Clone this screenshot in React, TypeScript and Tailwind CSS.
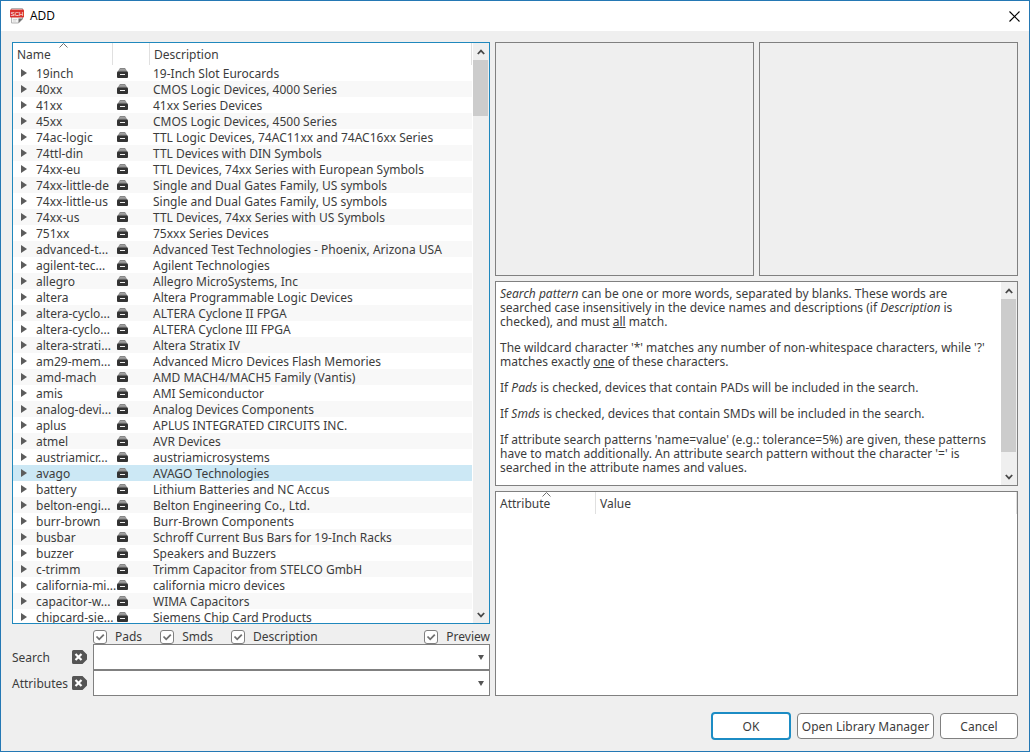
import { useState } from 'react';
import type { ReactNode } from 'react';
import clsx from 'clsx';

const LIBRARIES: [string, string][] = [
  ['19inch', '19-Inch Slot Eurocards'],
  ['40xx', 'CMOS Logic Devices, 4000 Series'],
  ['41xx', '41xx Series Devices'],
  ['45xx', 'CMOS Logic Devices, 4500 Series'],
  ['74ac-logic', 'TTL Logic Devices, 74AC11xx and 74AC16xx Series'],
  ['74ttl-din', 'TTL Devices with DIN Symbols'],
  ['74xx-eu', 'TTL Devices, 74xx Series with European Symbols'],
  ['74xx-little-de', 'Single and Dual Gates Family, US symbols'],
  ['74xx-little-us', 'Single and Dual Gates Family, US symbols'],
  ['74xx-us', 'TTL Devices, 74xx Series with US Symbols'],
  ['751xx', '75xxx Series Devices'],
  ['advanced-t...', 'Advanced Test Technologies - Phoenix, Arizona USA'],
  ['agilent-tec...', 'Agilent Technologies'],
  ['allegro', 'Allegro MicroSystems, Inc'],
  ['altera', 'Altera Programmable Logic Devices'],
  ['altera-cyclo...', 'ALTERA Cyclone II FPGA'],
  ['altera-cyclo...', 'ALTERA Cyclone III FPGA'],
  ['altera-strati...', 'Altera Stratix IV'],
  ['am29-mem...', 'Advanced Micro Devices Flash Memories'],
  ['amd-mach', 'AMD MACH4/MACH5 Family (Vantis)'],
  ['amis', 'AMI Semiconductor'],
  ['analog-devi...', 'Analog Devices Components'],
  ['aplus', 'APLUS INTEGRATED CIRCUITS INC.'],
  ['atmel', 'AVR Devices'],
  ['austriamicr...', 'austriamicrosystems'],
  ['avago', 'AVAGO Technologies'],
  ['battery', 'Lithium Batteries and NC Accus'],
  ['belton-engi...', 'Belton Engineering Co., Ltd.'],
  ['burr-brown', 'Burr-Brown Components'],
  ['busbar', 'Schroff Current Bus Bars for 19-Inch Racks'],
  ['buzzer', 'Speakers and Buzzers'],
  ['c-trimm', 'Trimm Capacitor from STELCO GmbH'],
  ['california-mi...', 'california micro devices'],
  ['capacitor-w...', 'WIMA Capacitors'],
  ['chipcard-sie...', 'Siemens Chip Card Products'],
];

function SchIcon() {
  return (
    <svg viewBox="0 0 14 16" className="h-4 w-3.5" aria-hidden>
      <path d="M1.5.5h11v10.500l-4 4h-7z" fill="#f4f4f4" stroke="#b4b4b4" />
      <path d="M13 10.500H8.500V15z" fill="#6e6e6e" />
      <path d="M3 11.500h4M3 13h3" stroke="#d4d4d4" />
      <rect x="0" y="1.500" width="14" height="8" rx=".8" fill="#d9302c" />
      <text x="7" y="7.800" textAnchor="middle" fill="#fff" fontSize="6" fontFamily="Liberation Sans, sans-serif">SCH</text>
    </svg>
  );
}

function DrawerIcon() {
  return (
    <svg viewBox="0 0 11 10" className="h-2.5 w-[11px]" aria-hidden>
      <path d="M3 0h5l1 1.500 1.500 2.500H.5L2 1.500z" fill="#858585" />
      <path d="M2.500 1.500h6M1.500 3h8" stroke="#b8b8b8" strokeWidth=".5" />
      <rect x="0" y="3.500" width="11" height="6.500" rx="1" fill="#333" />
      <path d="M3 6.500h5" stroke="#f2f2f2" />
    </svg>
  );
}

function SortMark() {
  return (
    <svg viewBox="0 0 9 5" className="absolute left-[46px] top-0 h-[5px] w-[9px]" aria-hidden>
      <path d="M.5 4.5l4-4 4 4" fill="none" stroke="#707070" />
    </svg>
  );
}

function ScrollBar({ thumb }: { thumb: string }) {
  return (
    <div className="flex w-[17px] shrink-0 flex-col border-l border-white bg-[#efefef] pr-px">
      <button aria-label="Scroll up" className="flex h-[17px] w-full shrink-0 items-center justify-center">
        <svg viewBox="0 0 8 6" className="h-1.5 w-2"><path d="M.8 5l3.2-3.4L7.2 5" fill="none" stroke="#484848" strokeWidth="1.8" /></svg>
      </button>
      <div className="min-h-0 flex-1"><div className={clsx('bg-[#cccccc]', thumb)} /></div>
      <button aria-label="Scroll down" className="flex h-[17px] w-full shrink-0 items-center justify-center">
        <svg viewBox="0 0 8 6" className="h-1.5 w-2"><path d="M.8 1l3.2 3.4L7.2 1" fill="none" stroke="#484848" strokeWidth="1.8" /></svg>
      </button>
    </div>
  );
}

function Check({ className, children }: { className?: string; children: ReactNode }) {
  const [on, setOn] = useState(true);
  return (
    <label className={clsx('flex items-center gap-2 leading-[14px]', className)}>
      <span className="relative h-3.5 w-3.5">
        <input
          type="checkbox" checked={on} onChange={(e) => setOn(e.target.checked)}
          className="block h-3.5 w-3.5 appearance-none rounded-[3px] border border-[#808080] bg-white"
        />
        {on && (
          <svg viewBox="0 0 14 14" className="pointer-events-none absolute inset-0" aria-hidden>
            <path d="M3.5 6.5l2.7 2.8L10.8 4.6" fill="none" stroke="#707070" strokeWidth="1.8" />
          </svg>
        )}
      </span>
      {children}
    </label>
  );
}

function ComboRow({ id, label }: { id: string; label: string }) {
  return (
    <div className="flex h-[26px] items-center">
      <label htmlFor={id} className="w-[60px] shrink-0 pt-0.5">{label}</label>
      <button aria-label={`Clear ${label}`} className="w-[21px] shrink-0">
        <svg viewBox="0 0 15 14" className="h-3.5 w-[15px]" aria-hidden>
          <path d="M1.5 0h9L15 4.5v5L10.5 14h-9A1.5 1.5 0 0 1 0 12.5v-11A1.5 1.5 0 0 1 1.5 0z" fill="#555" />
          <path d="M3.5 4l6 6M9.5 4l-6 6" stroke="#fff" strokeWidth="2.2" />
        </svg>
      </button>
      <div className="relative h-full flex-1">
        <select id={id} className="h-full w-full appearance-none border border-[#808080] bg-white px-1 focus:outline-none">
          <option value="" />
        </select>
        <svg viewBox="0 0 6 5" className="pointer-events-none absolute right-[6px] top-[11px] h-[5px] w-1.5" aria-hidden>
          <path d="M0 0h6L3 5z" fill="#555" />
        </svg>
      </div>
    </div>
  );
}

function LibraryList() {
  const [selected, setSelected] = useState(25);
  return (
    <div className="flex min-h-0 flex-1 overflow-hidden border border-[#2088bd] bg-white">
      <div className="min-w-0 flex-1 overflow-hidden">
        <table className="w-full table-fixed border-separate border-spacing-0 text-left">
          <thead>
            <tr className="h-[22px]">
              <th className="relative w-[100px] border-r border-[#e0e0e0] p-0 pl-1 pt-0.5 font-normal">Name<SortMark /></th>
              <th className="w-[37px] border-r border-[#e0e0e0] p-0" />
              <th className="border-r border-[#e0e0e0] p-0 pl-1 pt-0.5 font-normal">Description</th>
            </tr>
          </thead>
          <tbody>
            {LIBRARIES.map(([name, description], i) => (
              <tr key={i} onClick={() => setSelected(i)} className={clsx('h-4 whitespace-nowrap leading-[14px]', i === selected ? 'bg-[#cce8f5]' : i % 2 === 1 && 'bg-[#f8f8f8]')}>
                <td className="p-0">
                  <div className="flex items-center gap-[9px] pl-2">
                    <svg viewBox="0 0 6 8" className="h-2 w-1.5 shrink-0" aria-hidden><path d="M0 0l6 4-6 4z" fill="#5c5c5c" /></svg>
                    <span className="pt-0.5">{name}</span>
                  </div>
                </td>
                <td className="p-0 pl-1"><DrawerIcon /></td>
                <td className="p-0 pl-[3px] pt-0.5">{description}</td>
              </tr>
            ))}
          </tbody>
        </table>
      </div>
      <ScrollBar thumb="h-14" />
    </div>
  );
}

function HelpText() {
  return (
    <div className="flex h-[205px] shrink-0 border border-[#808080] bg-white">
      <div className="min-w-0 flex-1 space-y-3 overflow-hidden pl-1 pt-[5px] leading-[14px]">
        <p><i>Search pattern</i> can be one or more words, separated by blanks. These words are searched case insensitively in the device names and descriptions (if <i>Description</i> is checked), and must <u>all</u> match.</p>
        <p>The wildcard character '*' matches any number of non-whitespace characters, while '?' matches exactly <u>one</u> of these characters.</p>
        <p>If <i>Pads</i> is checked, devices that contain PADs will be included in the search.</p>
        <p>If <i>Smds</i> is checked, devices that contain SMDs will be included in the search.</p>
        <p>If attribute search patterns 'name=value' (e.g.: tolerance=5%) are given, these patterns have to match additionally. An attribute search pattern without the character '=' is searched in the attribute names and values.</p>
      </div>
      <ScrollBar thumb="h-[153px]" />
    </div>
  );
}

export default function App() {
  return (
    <div className="flex h-screen flex-col border border-[#2478b4] bg-[#efefef] font-['Noto_Sans',sans-serif] text-[12px] text-[#3c3c3c]">
      <header className="flex h-[30px] shrink-0 items-center gap-1.5 bg-white pl-[9px] pr-[9px]">
        <SchIcon />
        <h1 className="flex-1 font-['Open_Sans',sans-serif] text-black">ADD</h1>
        <button aria-label="Close">
          <svg viewBox="0 0 11 11" className="h-[11px] w-[11px]"><path d="M.5.5l10 10M10.5.5l-10 10" stroke="#000" strokeWidth="1.1" /></svg>
        </button>
      </header>

      <main className="flex min-h-0 flex-1 gap-[5px] px-[11px] pt-[11px]">
        <section className="flex w-[478px] shrink-0 flex-col">
          <LibraryList />
          <div className="flex h-5 shrink-0 items-end gap-[18px] pl-[81px]">
            <Check>Pads</Check>
            <Check>Smds</Check>
            <Check>Description</Check>
            <Check className="ml-auto">Preview</Check>
          </div>
          <ComboRow id="search" label="Search" />
          <ComboRow id="attributes" label="Attributes" />
        </section>

        <section className="flex min-w-0 flex-1 flex-col gap-[5px]">
          <div className="flex h-[234px] shrink-0 gap-[5px]">
            <div className="flex-1 border border-[#808080]" />
            <div className="flex-1 border border-[#808080]" />
          </div>
          <HelpText />
          <div className="min-h-0 flex-1 border border-[#808080] bg-white">
            <table className="w-full table-fixed border-separate border-spacing-0 text-left">
              <thead>
                <tr className="h-[22px]">
                  <th className="relative w-[100px] border-r border-[#e0e0e0] p-0 pl-1 pt-0.5 font-normal">Attribute<SortMark /></th>
                  <th className="border-r border-[#e0e0e0] p-0 pl-1 pt-0.5 font-normal">Value</th>
                </tr>
              </thead>
            </table>
          </div>
        </section>
      </main>

      <footer className="flex h-[55px] shrink-0 items-center justify-end gap-1.5 px-[11px] pb-1 pt-2">
        <button className="h-7 w-20 rounded border-2 border-[#1c8cc4] bg-white pt-0.5">OK</button>
        <button className="h-[26px] w-[137px] rounded border border-[#808080] bg-white pt-0.5">Open Library Manager</button>
        <button className="h-[26px] w-[78px] rounded border border-[#808080] bg-white pt-0.5">Cancel</button>
      </footer>
    </div>
  );
}
